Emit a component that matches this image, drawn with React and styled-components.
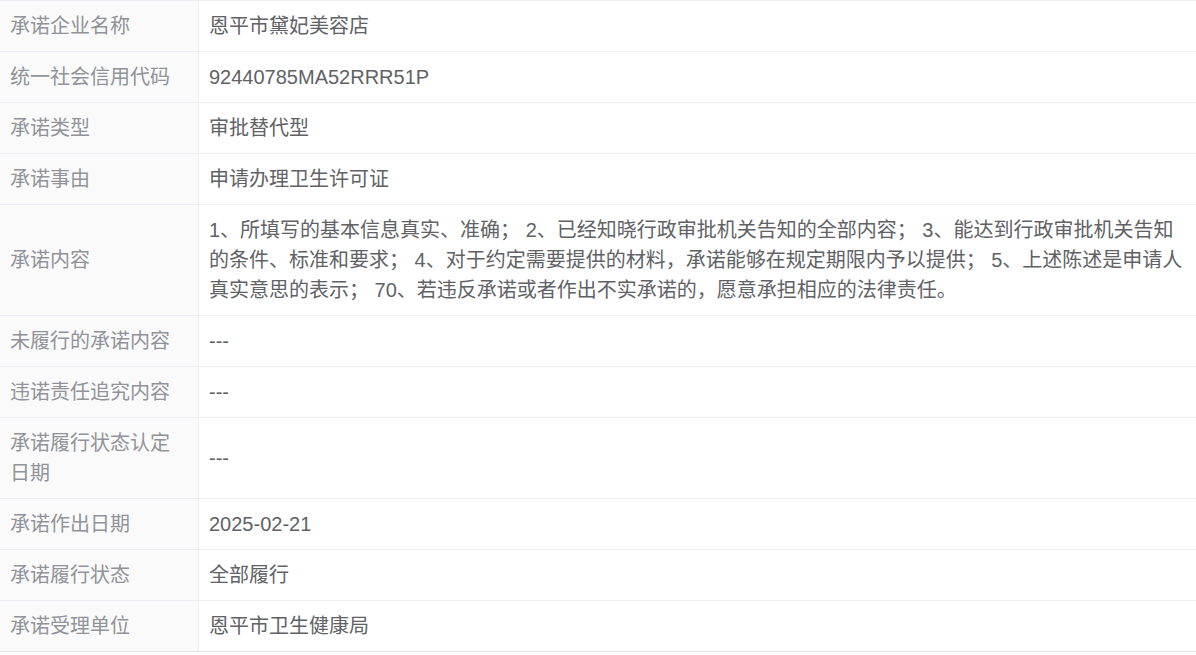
import React from "react";
import styled, { createGlobalStyle } from "styled-components";

const GlobalStyle = createGlobalStyle`
  html, body {
    margin: 0;
    padding: 0;
    background: #fff;
  }
  body {
    font-family: "Liberation Sans", "Noto Sans CJK SC", sans-serif;
  }
`;

const rows = [
  { label: "承诺企业名称", value: "恩平市黛妃美容店" },
  { label: "统一社会信用代码", value: "92440785MA52RRR51P" },
  { label: "承诺类型", value: "审批替代型" },
  { label: "承诺事由", value: "申请办理卫生许可证" },
  {
    label: "承诺内容",
    value:
      "1、所填写的基本信息真实、准确； 2、已经知晓行政审批机关告知的全部内容； 3、能达到行政审批机关告知的条件、标准和要求； 4、对于约定需要提供的材料，承诺能够在规定期限内予以提供； 5、上述陈述是申请人真实意思的表示； 70、若违反承诺或者作出不实承诺的，愿意承担相应的法律责任。",
  },
  { label: "未履行的承诺内容", value: "---" },
  { label: "违诺责任追究内容", value: "---" },
  { label: "承诺履行状态认定日期", value: "---" },
  { label: "承诺作出日期", value: "2025-02-21" },
  { label: "承诺履行状态", value: "全部履行" },
  { label: "承诺受理单位", value: "恩平市卫生健康局" },
];

const Table = styled.div`
  width: 1196px;
  border-top: 1px solid #ebeef5;
  border-bottom: 1px solid #e4e4e4;
  display: flex;
  flex-direction: column;
`;

const Row = styled.div`
  display: grid;
  grid-template-columns: 199px 1fr;
  border-top: ${(p) => (p.$first ? "none" : "1px solid #ebeef5")};
`;

const Cell = styled.div`
  display: flex;
  align-items: center;
  padding: 10px 10px 10px 10px;
  font-size: 20px;
  line-height: 30px;
`;

const Label = styled(Cell)`
  background: #fafafa;
  color: #909399;
  border-right: 1px solid #ebeef5;
  padding-right: 12px;
`;

const Value = styled(Cell)`
  color: #606266;
  padding-right: 8px;
`;

export default function App() {
  return (
    <>
      <GlobalStyle />
      <Table>
        {rows.map((r, i) => (
          <Row key={r.label} $first={i === 0}>
            <Label>{r.label}</Label>
            <Value>{r.value}</Value>
          </Row>
        ))}
      </Table>
    </>
  );
}
